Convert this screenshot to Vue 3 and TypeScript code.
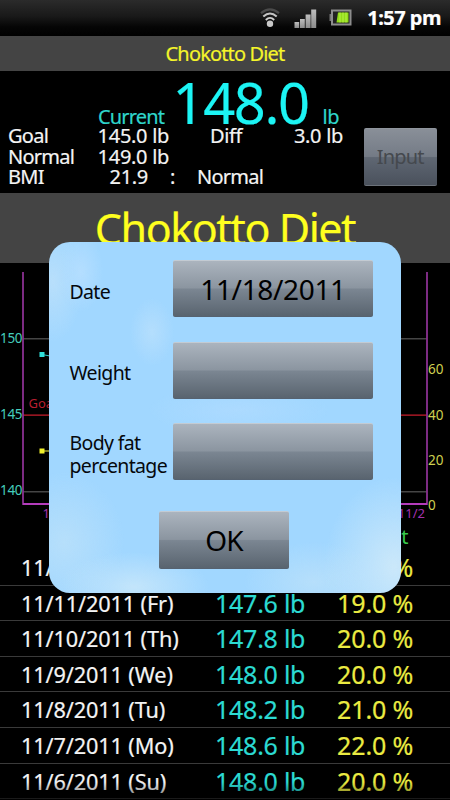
<script setup lang="ts">
interface Entry {
  date: string
  weight: string
  fat: string
}

const entries: Entry[] = [
  { date: '11/12/2011 (Sa)', weight: '147.4 lb', fat: '19.0 %' },
  { date: '11/11/2011 (Fr)', weight: '147.6 lb', fat: '19.0 %' },
  { date: '11/10/2011 (Th)', weight: '147.8 lb', fat: '20.0 %' },
  { date: '11/9/2011 (We)', weight: '148.0 lb', fat: '20.0 %' },
  { date: '11/8/2011 (Tu)', weight: '148.2 lb', fat: '21.0 %' },
  { date: '11/7/2011 (Mo)', weight: '148.6 lb', fat: '22.0 %' },
  { date: '11/6/2011 (Su)', weight: '148.0 lb', fat: '20.0 %' },
]

const leftTicks = [
  { label: '150', y: 79.5 },
  { label: '145', y: 155.5 },
  { label: '140', y: 232 },
]
const rightTicks = [
  { label: '60', y: 110.5 },
  { label: '40', y: 156.5 },
  { label: '20', y: 201.5 },
  { label: '0', y: 246.5 },
]
</script>

<template>
  <div class="screen">
    <header class="status">
      <svg class="wifi" width="22" height="22" viewBox="0 0 22 22" fill="none">
        <path d="M2 6.2Q11 -1.6 20 6.2" stroke="#4b4b4b" stroke-width="2.2" />
        <path d="M4.3 9.6Q11 3.4 17.7 9.6" stroke="#c4c4c4" stroke-width="2" />
        <path d="M6.8 13Q11 8.8 15.2 13" stroke="#d0d0d0" stroke-width="1.8" />
        <circle cx="11" cy="16.8" r="3.2" fill="#c9c9c9" />
      </svg>
      <svg class="signal" width="23" height="20" viewBox="0 0 23 20">
        <defs>
          <linearGradient id="bars" x1="0" y1="0" x2="0" y2="1">
            <stop offset="0" stop-color="#bdbdbd" />
            <stop offset="1" stop-color="#8c8c8c" />
          </linearGradient>
        </defs>
        <g fill="url(#bars)">
          <rect x="0.5" y="13" width="4.7" height="6" />
          <rect x="6" y="10" width="4.8" height="9" />
          <rect x="11.6" y="5.5" width="5" height="13.5" />
          <rect x="17.2" y="0.5" width="5" height="18.5" />
        </g>
      </svg>
      <svg class="battery" width="23" height="17" viewBox="0 0 23 17">
        <rect x="0.5" y="5" width="3" height="7" fill="#777" />
        <rect x="3" y="1.5" width="18.5" height="14" fill="#222" stroke="#8d8d8d" stroke-width="2" />
        <path d="M9 3.500H19.500V13.500H7.500Z" fill="#91dc18" />
        <path d="M11 3.5v10M14 3.5v10M17 3.5v10" stroke="#b8ef48" stroke-width="1" />
      </svg>
      <span class="clock">1:57 pm</span>
    </header>

    <div class="titlebar"><span>Chokotto Diet</span></div>

    <section class="summary">
      <div class="current">
        <span class="cur-label">Current</span>
        <span class="cur-value">148.0</span>
        <span class="cur-unit">lb</span>
      </div>
      <div class="stats">
        <span class="word">Goal</span><span class="num">145.0 lb</span><span></span>
        <span class="diff word">Diff</span><span class="num">3.0 lb</span>
        <span class="word">Normal</span><span class="num">149.0 lb</span><span></span><span></span><span></span>
        <span class="word">BMI</span><span class="bmi num">21.9</span><span>:</span><span class="word wide">Normal</span>
      </div>
      <button class="btn input-btn">Input</button>
    </section>

    <div class="banner"><span>Chokotto Diet</span></div>

    <svg class="chart" width="450" height="263" viewBox="0 0 450 263">
      <g stroke="#454545" stroke-width="1.4">
        <path d="M23 75.7H427M23 228.7H427" />
      </g>
      <path d="M23 152.2H427" stroke="#c81c2c" stroke-width="1.2" />
      <path d="M23 9V241H427V9" fill="none" stroke="#8a3091" stroke-width="1.8" />
      <path d="M23 241H427" stroke="#b43cbc" stroke-width="1.8" />
      <path d="M42 91.5L50 93" stroke="#2cc8c8" stroke-width="1.2" />
      <rect x="39.5" y="89" width="5" height="5" fill="#2fe0dc" />
      <path d="M42 188H50" stroke="#c9c93a" stroke-width="1.2" />
      <rect x="39.5" y="185.5" width="5" height="5" fill="#f0f02c" />
      <text x="28.5" y="145" class="goal">Goal</text>
      <text v-for="t in leftTicks" :key="t.label" x="0" :y="t.y" class="tick cyan" textLength="22.500">{{ t.label }}</text>
      <text v-for="t in rightTicks" :key="t.label" x="428" :y="t.y" class="tick yellow">{{ t.label }}</text>
      <text x="42.500" y="254.500" class="day">11/6</text>
      <text x="425" y="254.500" class="day" text-anchor="end">11/2</text>
    </svg>

    <div class="thead"><span></span><span>Weight</span><span class="fat-head">Body fat</span></div>
    <ul class="log">
      <li v-for="e in entries" :key="e.date">
        <span class="date">{{ e.date }}</span>
        <span class="weight">{{ e.weight }}</span>
        <span class="fat">{{ e.fat }}</span>
      </li>
    </ul>

    <div class="dialog">
      <div class="field">
        <label>Date</label>
        <button class="btn value">11/18/2011</button>
      </div>
      <div class="field">
        <label>Weight</label>
        <button class="btn value"></button>
      </div>
      <div class="field">
        <label>Body fat<br />percentage</label>
        <button class="btn value"></button>
      </div>
      <button class="btn ok">OK</button>
    </div>
    <div class="fade"></div>
  </div>
</template>

<style>
body {
  background: #000;
  overflow: hidden;
}
</style>

<style scoped>
.screen {
  position: relative;
  width: 450px;
  height: 800px;
  overflow: hidden;
  background: #000;
  color: #f4f4f4;
  font-family: 'Noto Sans', 'Open Sans', sans-serif;
  font-size: 20px;
  -webkit-text-stroke: 0.2px currentColor;
}
.screen span,
.screen label {
  white-space: nowrap;
}
.status {
  display: flex;
  height: 35.5px;
  box-sizing: border-box;
  padding: 0 9px 0 259px;
  background: linear-gradient(#2b2b2b, #191919 45%, #050505 75%, #000);
}
.wifi {
  margin-top: 7px;
}
.signal {
  margin: 9px 0 0 13px;
}
.battery {
  margin: 9px 0 0 12px;
}
.clock {
  margin-left: auto;
  font-weight: 700;
  font-size: 20px;
  line-height: 36px;
  letter-spacing: -0.5px;
  color: #fff;
}
.titlebar {
  height: 35.5px;
  background: #444;
  color: #f5f52a;
  text-align: center;
  font-size: 20px;
  line-height: 36px;
  letter-spacing: -0.85px;
}
.summary {
  position: relative;
  height: 122px;
  box-sizing: border-box;
  padding-left: 8px;
}
.current {
  display: flex;
  align-items: baseline;
  height: 55px;
  padding-left: 90px;
  color: #2fd6cc;
  line-height: 62px;
}
.cur-label {
  width: 74.500px;
  letter-spacing: -0.85px;
}
.cur-value {
  width: 150px;
  font-size: 56px;
  letter-spacing: -1.4px;
  color: #1cf4f4;
}
.cur-unit {
  letter-spacing: -0.5px;
}
.stats {
  display: grid;
  grid-template-columns: 89px 73px 27px 72px 75px;
  grid-auto-rows: 20.600px;
  line-height: 20px;
}
.num {
  text-align: right;
  padding-right: 1px;
  letter-spacing: -0.3px;
}
.word {
  letter-spacing: -0.75px;
}
.diff {
  padding-left: 13px;
  letter-spacing: -0.4px;
}
.bmi {
  padding-right: 22px;
}
.wide {
  grid-column: span 2;
}
.btn {
  display: block;
  border: 0;
  border-top: 1.5px solid #c3cbd3;
  border-bottom: 1px solid #566270;
  border-radius: 2px;
  padding: 0;
  margin: 0;
  box-sizing: border-box;
  font: inherit;
  color: #000;
  background: linear-gradient(#abb4be, #8b95a0 49%, #7b8692 51%, #59646f);
  -webkit-text-stroke: 0;
}
.input-btn {
  position: absolute;
  left: 363.500px;
  top: 57px;
  width: 73.500px;
  height: 57.500px;
  color: #45494e;
  border-top-color: #8f959d;
  border-bottom-color: #6c727a;
  background: linear-gradient(#898f98, #747b86 49%, #5f6773 51%, #4a515c);
  letter-spacing: -0.8px;
}
.banner {
  height: 70px;
  background: #444;
  color: #ffff1f;
  text-align: center;
  font-size: 43px;
  line-height: 72px;
  letter-spacing: -1.45px;
}
.chart {
  display: block;
  font-family: 'Noto Sans', sans-serif;
  -webkit-text-stroke: 0;
}
.tick {
  font-size: 13.500px;
}
.cyan {
  fill: #45cdbc;
}
.yellow {
  fill: #cfd050;
}
.goal {
  font-size: 13px;
  fill: #b91f30;
}
.day {
  font-size: 13px;
  fill: #a431b0;
}
.thead,
.log li {
  display: grid;
  grid-template-columns: 194px 122px 100px;
  padding-left: 21px;
}
.thead {
  height: 24px;
  line-height: 21px;
  color: #37c84c;
  -webkit-text-stroke: 0;
}
.fat-head {
  justify-self: start;
  letter-spacing: -0.95px;
}
.log {
  list-style: none;
  margin: 0;
  padding: 0;
}
.log li {
  height: 35.600px;
  box-sizing: border-box;
  border-bottom: 1.500px solid #3a3a3a;
  align-items: start;
  line-height: 35px;
}
.date {
  font-size: 21.700px;
  letter-spacing: -0.13px;
}
.weight {
  font-size: 25px;
  letter-spacing: -0.25px;
  color: #2cdbd3;
}
.fat {
  font-size: 25px;
  letter-spacing: -0.1px;
  color: #ebeb42;
}
.dialog {
  position: absolute;
  left: 48.500px;
  top: 241.500px;
  width: 352.500px;
  height: 351.500px;
  box-sizing: border-box;
  padding: 18.500px 28px 0 21px;
  border-radius: 21px;
  color: #05080c;
  background:
    radial-gradient(ellipse 22px 40px at 32px 30px, #b4deff 0, #b4deff00 100%),
    radial-gradient(ellipse 30px 60px at 4px 40px, #b8dffb 0, #b8dffb00 100%),
    radial-gradient(ellipse 22px 34px at 103px 90px, #b4defd 0, #b4defd00 100%),
    radial-gradient(ellipse 75px 35px at 85px 345px, #c3e5fb 0, #c3e5fb00 100%),
    radial-gradient(ellipse 60px 70px at 15px 300px, #b6dffb 0, #b6dffb00 100%),
    radial-gradient(ellipse 70px 90px at 345px 325px, #cbe8fa 0, #cbe8fa00 100%),
    radial-gradient(ellipse 70px 40px at 265px 340px, #b6dffb 0, #b6dffb00 100%),
    radial-gradient(ellipse 90px 25px at 190px 168px, #acdaff 0, #acdaff00 100%),
    #a1d7ff;
  -webkit-text-stroke: 0;
}
.field {
  display: flex;
  align-items: center;
  justify-content: space-between;
  height: 57px;
  margin-bottom: 24.500px;
}
.field label {
  font-size: 19.500px;
  line-height: 23px;
  letter-spacing: -0.65px;
  padding-top: 5px;
}
.value {
  flex: none;
  width: 200px;
  height: 57px;
  font-size: 28px;
  letter-spacing: -0.35px;
}
.ok {
  width: 130px;
  height: 58px;
  margin: 31px 0 0 89.500px;
  font-size: 28px;
  letter-spacing: -0.8px;
}
.fade {
  position: absolute;
  left: 0;
  right: 0;
  bottom: 0;
  height: 18px;
  background: linear-gradient(#0000, #0009);
}
</style>
